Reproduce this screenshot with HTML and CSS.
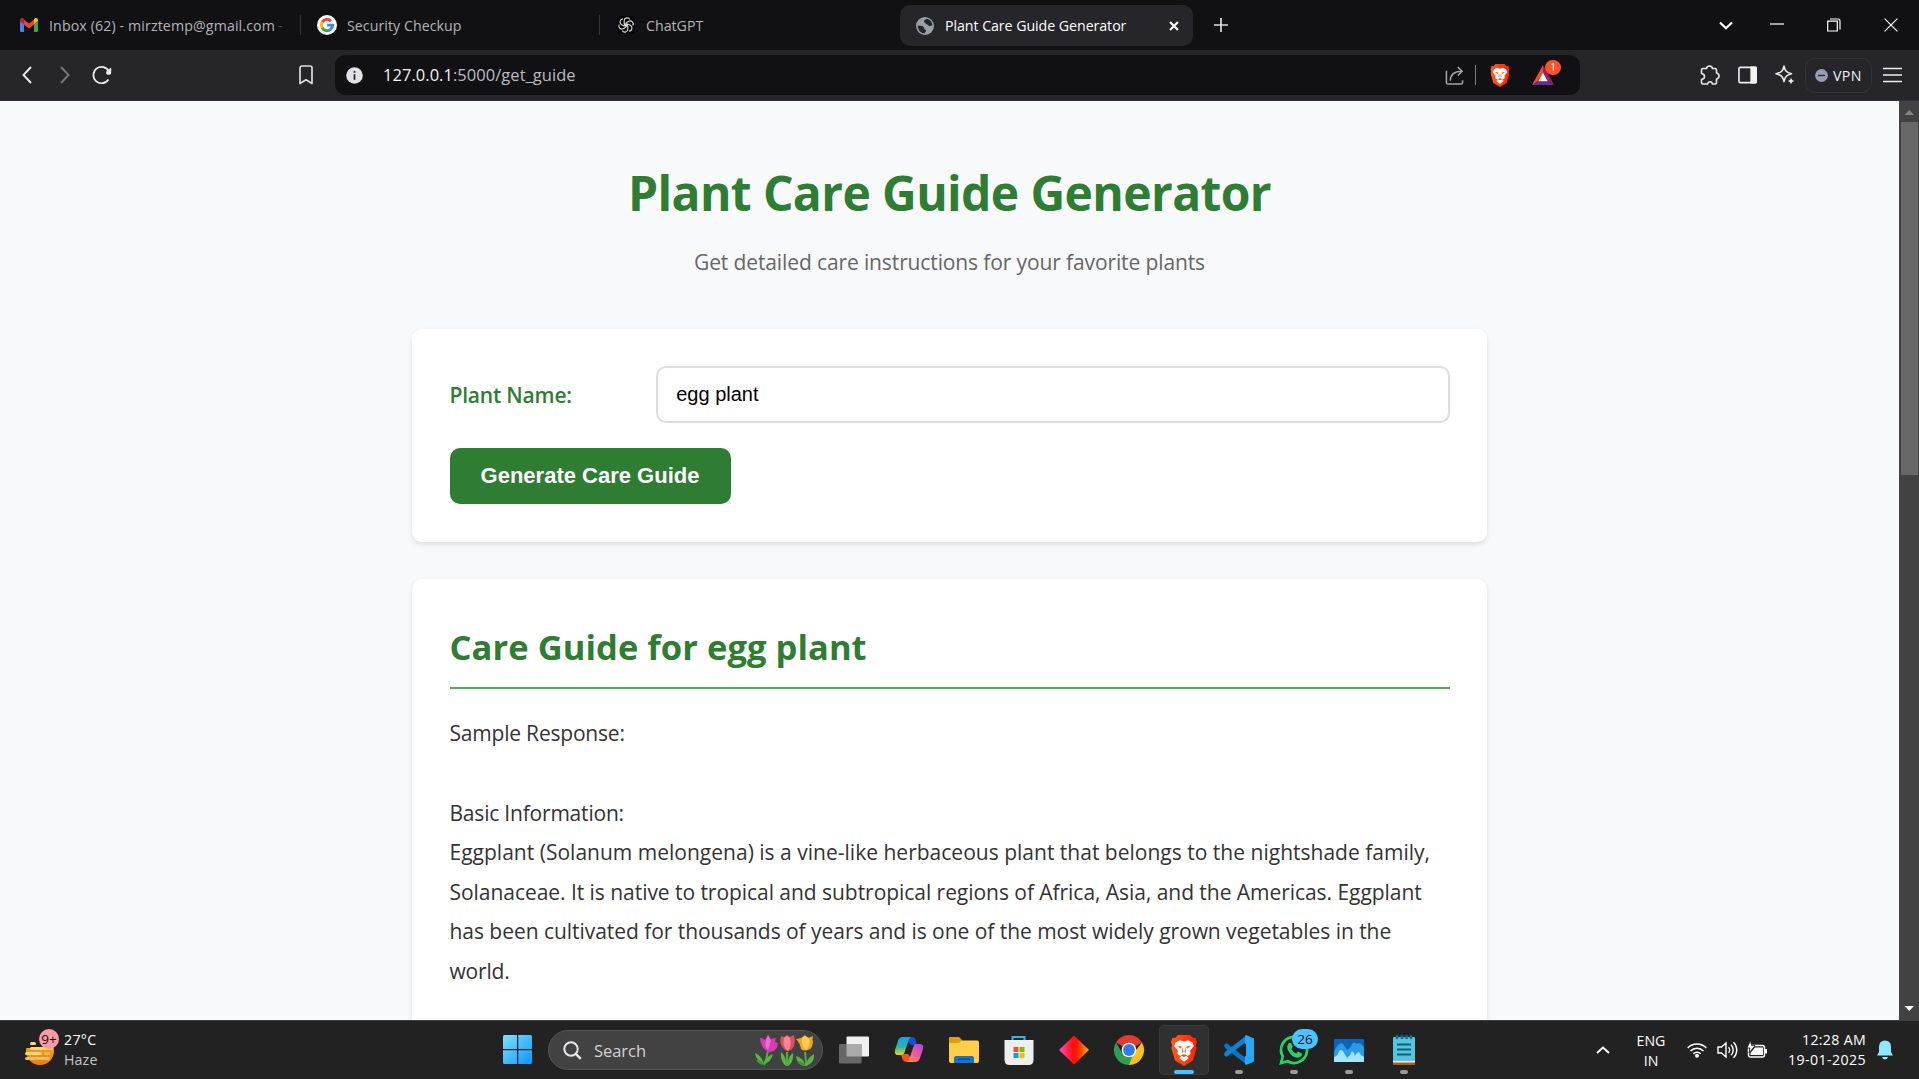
FILE: index.html
```html
<!DOCTYPE html>
<html lang="en">
<head>
<meta charset="utf-8">
<title>Plant Care Guide Generator</title>
<link rel="stylesheet" href="styles.css">
</head>
<body>
<svg class="defs" width="0" height="0" aria-hidden="true">
  <defs>
    <linearGradient id="braveFill" x1="0" x2="1"><stop offset="0" stop-color="#ff5a1f"/><stop offset="1" stop-color="#ff2000"/></linearGradient>
    <symbol id="lion" viewBox="0 0 26 31">
      <path fill="url(#braveFill)" d="M7 0h12l3 3 2.500-.300L26 7l-1 3 .6 3-3.600 12.500L13 31 4 25.500.4 13 1 10 0 7l1.500-4.300L4 3z"/>
      <path fill="#fff" d="M13 6.500l4-1.300 4.500 2.300 1.300 3.500-3.800 4.800.6 3.200-3.600 2.500 2 1.500-5 3.800-5-3.800 2-1.500L6.400 19l.6-3.200L3.200 11l1.300-3.500L9 5.200z"/>
      <path fill="#ff4a10" d="M6 10.500l5 1.200-1.500 1.800zM20 10.500l-5 1.200 1.500 1.800zM11.800 12l.6 5-1.400 1zM14.200 12l-.6 5 1.400 1zM9.500 20.500L13 19.200l3.500 1.300L13 22z"/>
    </symbol>
  </defs>
</svg>

<div class="screen">
  <header class="tabs">
    <div class="tab tab-mail">
      <svg class="ic-mail" viewBox="0 0 18 14"><path fill="#4285f4" d="M0 3l4 3v8H1.200A1.200 1.200 0 0 1 0 12.800z"/><path fill="#34a853" d="M18 3l-4 3v8h2.800a1.200 1.200 0 0 0 1.200-1.200z"/><path fill="#ea4335" d="M3 1l6 4.600L15 1v5L9 10.500 3 6z"/><path fill="#c5221f" d="M0 2C0 .3 2-.6 3.300.5L4 1v5L0 3z"/><path fill="#fbbc04" d="M18 2c0-1.700-2-2.600-3.300-1.500L14 1v5l4-3z"/></svg>
      <span class="t-mail">Inbox (62) - mirztemp@gmail.com</span><span class="fade">-</span>
    </div>
    <div class="tab tab-sec">
      <svg class="ic-20" viewBox="0 0 20 20"><circle cx="10" cy="10" r="10" fill="#fff"/><g fill="none" stroke-width="2.900"><path stroke="#ea4335" d="M5.100 7.300A5.600 5.600 0 0 1 14 6"/><path stroke="#fbbc04" d="M5.200 12.900A5.700 5.700 0 0 1 5.200 7.100"/><path stroke="#34a853" d="M5.100 12.700A5.600 5.600 0 0 0 13.600 14.300"/><path stroke="#4285f4" d="M10.200 10.100h5.500a5.600 5.600 0 0 1-2.200 4.300"/></g></svg>
      <span class="t-sec">Security Checkup</span>
    </div>
    <div class="tab tab-gpt">
      <svg class="ic-18" viewBox="0 0 20 20"><rect width="20" height="20" rx="4" fill="#050505"/><g fill="none" stroke="#d6d6d6" stroke-width="1.300"><path d="M8 9V5.200a3.300 3.300 0 0 1 6.200-1.400M8 9l3.800 2.200"/><path d="M8 9V5.200a3.300 3.300 0 0 1 6.200-1.400M8 9l3.800 2.200" transform="rotate(60 10 10)"/><path d="M8 9V5.200a3.300 3.300 0 0 1 6.200-1.400M8 9l3.800 2.200" transform="rotate(120 10 10)"/><path d="M8 9V5.200a3.300 3.300 0 0 1 6.200-1.400M8 9l3.800 2.200" transform="rotate(180 10 10)"/><path d="M8 9V5.200a3.300 3.300 0 0 1 6.200-1.400M8 9l3.800 2.200" transform="rotate(240 10 10)"/><path d="M8 9V5.200a3.300 3.300 0 0 1 6.200-1.400M8 9l3.800 2.200" transform="rotate(300 10 10)"/></g></svg>
      <span>ChatGPT</span>
    </div>
    <div class="tab tab-active">
      <svg class="ic-18" viewBox="0 0 18 18"><circle cx="9" cy="9" r="9" fill="#9aa0a6"/><path fill="#25252a" d="M10.500 1.700C9.500 3 8 2.800 8 4.500c0 1.200 1.500.8 1.700 2 .2 1 1.800.5 2.300 1.500.5 1.200 2.500 1 4.400.5A7.400 7.400 0 0 0 10.500 1.700zM1.600 8.600c2 .2 5 .2 6 1.400 1 1 .2 2 1.200 2.500 1 .4 1.600 1.200.8 2.200-.5.700-.8 1-1 1.700A7.400 7.400 0 0 1 1.600 8.600z"/></svg>
      <span class="t-plant">Plant Care Guide Generator</span>
      <svg class="ic-close" viewBox="0 0 12 12"><path d="M2 2l8 8m0-8l-8 8" stroke="#fff" stroke-width="2.200"/></svg>
    </div>
    <svg class="ic-plus" viewBox="0 0 14 14"><path d="M7 0v14M0 7h14" stroke="#ddd" stroke-width="1.700"/></svg>
    <div class="window-buttons">
      <svg width="16" height="16" viewBox="0 0 16 16"><path d="M2 5.500l6 5.700 6-5.700" fill="none" stroke="#fff" stroke-width="2.200"/></svg>
      <svg class="ic-min" width="14" height="16" viewBox="0 0 14 16"><path d="M0 7h14" stroke="#fff" stroke-width="1.200"/></svg>
      <svg class="ic-max" width="14" height="14" viewBox="0 0 14 14"><path d="M.7 3.200h9.600v9.800H.7z M3 1h8a2 2 0 0 1 2 2v8.500" fill="none" stroke="#fff" stroke-width="1.200"/></svg>
      <svg class="ic-exit" width="14" height="14" viewBox="0 0 14 14"><path d="M.6.600l12.800 12.800m0-12.800L.6 13.400" stroke="#fff" stroke-width="1.200"/></svg>
    </div>
  </header>

  <nav class="toolbar">
    <svg class="nav-back" viewBox="0 0 10 18"><path d="M9 1L1.500 9 9 17" fill="none" stroke="#eee" stroke-width="1.900"/></svg>
    <svg class="nav-fwd" viewBox="0 0 10 18"><path d="M1 1l7.500 8L1 17" fill="none" stroke="#77777c" stroke-width="1.900"/></svg>
    <svg class="nav-reload" viewBox="0 0 20 20"><path d="M16.500 14.500A8.200 8.200 0 1 1 17 6.500" fill="none" stroke="#eee" stroke-width="1.700"/><path d="M19.200 2.500v5a2 2 0 0 1-2 2.200h-1.700a2.500 2.500 0 0 1-1-3.400z" fill="#eee"/></svg>
    <svg class="nav-mark" viewBox="0 0 14 20"><path d="M1 18.500V3a2 2 0 0 1 2-2h8a2 2 0 0 1 2 2v15.500L7 14.800z" fill="none" stroke="#ddd" stroke-width="1.700" stroke-linejoin="round"/></svg>
    <div class="address">
      <svg class="ic-info" viewBox="0 0 17 17"><circle cx="8.500" cy="8.500" r="8.300" fill="#e2e1e8"/><path d="M8.500 4v1.800M8.500 7.300v5.500" stroke="#222" stroke-width="1.700"/></svg>
      <span class="url"><b>127.0.0.1</b>:5000/get_guide</span>
      <svg class="ic-share" viewBox="0 0 20 20"><path d="M1.500 5v12.300a1.700 1.700 0 0 0 1.700 1.700h13.600a1.700 1.700 0 0 0 1.700-1.700V15M5.500 15.500c.3-6 4-10 12-10M13.500 1l4.500 4.500-4.500 4.500" fill="none" stroke="#a5a5a9" stroke-width="1.600"/></svg>
      <i class="bar"></i>
      <svg class="ic-lion" viewBox="0 0 26 31"><use href="#lion"/></svg>
      <div class="rewards">
        <svg viewBox="0 0 22 20"><path fill="#ff4724" d="M11 0v7.500L5.500 16.500 0 20z"/><path fill="#9e1f63" d="M11 0l11 20-5.500-3.500L11 7.500z"/><path fill="#662d91" d="M0 20l5.500-3.700h11L22 20z"/><path fill="#fff" d="M11 7.500l4.800 8.800H6.200z"/></svg>
        <span class="rewards-count">1</span>
      </div>
    </div>
    <svg class="ic-puzzle" viewBox="0 0 20 20"><path d="M3 3.500h3.500Q7 1 9.500 1T12.500 3.500H15q1.500 0 1.500 1.500v3Q19 8.500 19 11t-2.500 3v3.500q0 1.500-1.500 1.500h-2.500q-.5-2.300-2.500-2.300T7.500 19H3q-1.500 0-1.500-1.500V14.500Q4.500 14 4.500 11.500T1.500 8.500V5Q1.500 3.500 3 3.500z" fill="none" stroke="#e8e8ea" stroke-width="1.600" stroke-linejoin="round"/></svg>
    <svg class="ic-panel" viewBox="0 0 20 18"><rect x="1" y="1" width="18" height="16" rx="1.500" fill="none" stroke="#eee" stroke-width="1.700"/><path d="M13 0h5.500A1.500 1.500 0 0 1 20 1.500v15a1.500 1.500 0 0 1-1.500 1.500H13z" fill="#f3f3f3"/></svg>
    <svg class="ic-spark" viewBox="0 0 20 20"><path d="M9 1c1 5 2.500 6.500 7.500 7.800-5 1.300-6.500 2.800-7.500 7.800-1-5-2.500-6.500-8-7.800C6.500 7.500 8 6 9 1z" fill="none" stroke="#e8e8ea" stroke-width="1.600" stroke-linejoin="round"/><path d="M16 12.500c.5 2.200 1 2.700 3.500 3.500-2.500.8-3 1.300-3.500 3.500-.5-2.200-1-2.700-3.500-3.500 2.500-.8 3-1.300 3.500-3.500z" fill="#eee"/></svg>
    <div class="vpn"><svg width="13" height="13" viewBox="0 0 13 13"><circle cx="6.500" cy="6.500" r="6.400" fill="#9a9ab2"/><path d="M3 6.500h7" stroke="#25252a" stroke-width="1.300"/></svg><span class="t-vpn">VPN</span></div>
    <svg class="ic-menu" viewBox="0 0 19 16"><path d="M0 1.500h19M0 8h19M0 14.500h19" stroke="#eee" stroke-width="1.700"/></svg>
  </nav>

  <div class="viewport">
    <main class="page">
      <h1>Plant Care Guide Generator</h1>
      <p class="subtitle">Get detailed care instructions for your favorite plants</p>
      <section class="card form">
        <div class="field">
          <label for="plant">Plant Name:</label>
          <input id="plant" type="text" value="egg plant">
        </div>
        <button class="generate" type="button">Generate Care Guide</button>
      </section>
      <section class="card guide">
        <h2>Care Guide for egg plant</h2>
        <div class="answer">
          <p class="tight">Sample Response:</p>
          <p class="tight gap">Basic Information:</p>
          <p><span class="wide">Eggplant (Solanum melongena) is a vine-like herbaceous plant that belongs to the nightshade family,</span>
          <span class="even">Solanaceae. It is native to tropical and subtropical regions of Africa, Asia, and the Americas. Eggplant</span>
          <span class="even">has been cultivated for thousands of years and is one of the most widely grown vegetables in the</span>
          <span class="tight">world.</span></p>
        </div>
      </section>
    </main>
    <div class="scrollbar">
      <svg class="arrow" viewBox="0 0 20 21"><path d="M5.500 14h9.500l-4.700-5z" fill="#858585"/></svg>
      <i class="thumb"></i>
      <svg class="arrow arrow-down" viewBox="0 0 20 21"><path d="M5.500 7h9.500l-4.700 5z" fill="#fff"/></svg>
    </div>
  </div>

  <footer class="taskbar">
    <div class="weather">
      <div class="weather-icon">
        <svg viewBox="0 0 30 36"><defs><linearGradient id="sun" x1="0" y1="0" x2="0" y2="1"><stop offset="0" stop-color="#ffb21c"/><stop offset="1" stop-color="#f07a0c"/></linearGradient></defs><circle cx="15" cy="21" r="14" fill="url(#sun)"/><path fill="#222" d="M0 5h18v13H0z"/><g stroke-linecap="round" stroke-width="3"><path stroke="#fbd774" d="M6.500 13.500h3M6.500 18.500h20M1.500 23.500h14"/><path stroke="#f0bd5a" d="M20.500 23.500h3"/><path stroke="#e3bd75" d="M1.500 28.500h22"/></g></svg>
        <span class="weather-count">9+</span>
      </div>
      <div class="weather-text"><span class="temp">27°C</span><span class="dim">Haze</span></div>
    </div>
    <svg class="start" viewBox="0 0 30 30"><defs><linearGradient id="win" x1="0" y1="0" x2="1" y2="1"><stop offset="0" stop-color="#7fe0ff"/><stop offset="1" stop-color="#0a96ff"/></linearGradient></defs><path fill="url(#win)" d="M0 1.500A1.500 1.500 0 0 1 1.500 0H14v14H0zM15.300 0h12.200A1.500 1.500 0 0 1 29 1.500V14H15.300zM0 15.300h14V29H1.500A1.500 1.500 0 0 1 0 27.500zM15.300 15.300H29v12.200a1.500 1.500 0 0 1-1.500 1.500H15.300z"/></svg>
    <div class="search">
      <svg class="ic-search" viewBox="0 0 19 19"><circle cx="8" cy="8" r="6.700" fill="none" stroke="#e6e8ec" stroke-width="2"/><path d="M12.800 12.800l5 5" stroke="#e6e8ec" stroke-width="2.400"/></svg>
      <span class="search-text">Search</span>
      <svg class="tulips" viewBox="0 0 60 32">
        <g stroke="#4fae3c" stroke-width="2" fill="none"><path d="M13 16q-1 7-4 14M32 17v14M50 17q1 7 1 14"/></g>
        <path fill="#5db543" d="M9 29Q1 26 0 18q7 3 9 11zM9 29q2-8 9-10-2 8-9 10zM31 31q-6-5-5-14 6 5 5 14zM33 31q6-4 5-13-6 4-5 13zM50 31q-8-1-9-10 8 2 9 10zM51 31q0-7 8-12 1 9-8 12z"/>
        <path fill="#3f9a35" d="M9 30q-5 0-8-5 6 0 8 5zM50 31q-5 0-8-5 6 0 8 5z"/>
        <path fill="#d63bb4" d="M5 3q3 0 5 2l3-5 3 4 5-1-1 4 3 1q-1 9-9 9Q6 14 5 3z"/><path fill="#f06bd0" d="M11 5l2-5 3 6-3 9q-4-4-2-10z"/>
        <path fill="#e34b63" d="M26 1l3 1 3-2 3 2 4-2q2 8-1 13-5 6-10 0-4-5-2-12z"/><path fill="#f98793" d="M29 3l3-2 3 2q2 8-2 13-6-4-4-13z"/>
        <path fill="#eda526" d="M41 4l5-1 4-3 3 3 5-2q-1 3 0 6-1 6-3 7-6 3-9 0-1-6-5-10z"/><path fill="#ffcb58" d="M47 3l3-2 4 2q2 8-3 12-5-4-4-12z"/>
      </svg>
    </div>
    <div class="apps">
      <div class="app"><svg width="30" height="30" viewBox="0 0 30 30"><rect x="7.500" y="1.500" width="22.500" height="20" rx="1" fill="#f0f0f0"/><rect x="0" y="9" width="22.500" height="19.500" rx="1" fill="#686868"/><path d="M7.500 9h15v12.500h-15z" fill="#aaa"/></svg></div>
      <div class="app"><svg width="30" height="28" viewBox="0 0 30 28"><defs><linearGradient id="cpa" x1="0" y1="0" x2="0" y2="1"><stop offset="0" stop-color="#1c9ff0"/><stop offset=".55" stop-color="#27b7a5"/><stop offset="1" stop-color="#f5d20e"/></linearGradient><linearGradient id="cpb" x1="1" y1="0" x2="0" y2="1"><stop offset="0" stop-color="#9a4df5"/><stop offset=".5" stop-color="#f0569b"/><stop offset="1" stop-color="#ff9a3c"/></linearGradient></defs><path fill="#1652d6" d="M10 1h8q3 0 4 4l1 4h-6z"/><path fill="#f0522c" d="M20 26h-7q-4 0-5-4l-1-4h7z"/><path fill="url(#cpa)" d="M9 1h8q-2 1-3 5l-3 9q-1 4-4 4H4q-4 0-3-5l3-9q1-4 5-4z"/><path fill="url(#cpb)" d="M21 26h-8q2-1 3-5l3-9q1-4 4-4h3q4 0 3 5l-3 9q-1 4-5 4z"/></svg></div>
      <div class="app"><svg width="30" height="28" viewBox="0 0 30 28"><path fill="#dfa00c" d="M0 2Q0 1 1 1h9l3 3v5H0z"/><path fill="#ffcf48" d="M0 7h10l3-2.500h15q2 0 2 2V25q0 2-2 2H2q-2 0-2-2z"/><path fill="#1374cf" d="M5 27v-5q0-2 2-2h16q2 0 2 2v5z"/><path d="M9 23.300h12" stroke="#0a4c94" stroke-width="1.300"/></svg></div>
      <div class="app"><svg width="30" height="30" viewBox="0 0 30 30"><path d="M8.500 6V2h12v4" fill="none" stroke="#2fb4ec" stroke-width="2"/><path fill="#eeeeee" d="M.5 5h29v20q0 5-5 5h-19q-5 0-5-5z"/><path fill="#f25022" d="M9.500 12h5v5h-5z"/><path fill="#7fba00" d="M15.500 12h5v5h-5z"/><path fill="#00a4ef" d="M9.500 18h5v5h-5z"/><path fill="#ffb900" d="M15.500 18h5v5h-5z"/></svg></div>
      <div class="app"><svg width="30" height="30" viewBox="0 0 30 30"><defs><linearGradient id="dia"><stop offset="0" stop-color="#ff4fc8"/><stop offset=".45" stop-color="#ff1010"/><stop offset=".6" stop-color="#ff1800"/><stop offset="1" stop-color="#ffb000"/></linearGradient></defs><path fill="url(#dia)" d="M15 .5L30 15 15 29.500 0 15z"/></svg></div>
      <div class="app"><svg width="30" height="30" viewBox="0 0 30 30"><path fill="#e33b2e" d="M15 15L2 7.500a15 15 0 0 1 26 0z"/><path fill="#fbc116" d="M15 15h7l6-7.500A15 15 0 0 1 15 30l-1-2z"/><path fill="#2f9e4f" d="M2 7.500L8.500 18.500 18.400 21.500 15 30A15 15 0 0 1 2 7.500z"/><path fill="#e33b2e" d="M15 8h13l-.2-.7H15z"/><circle cx="15" cy="15" r="7.300" fill="#fff"/><circle cx="15" cy="15" r="5.900" fill="#2e7bea"/></svg></div>
      <div class="app current"><svg width="26" height="31" viewBox="0 0 26 31"><use href="#lion"/></svg></div>
      <div class="app running"><svg width="30" height="30" viewBox="0 0 30 30"><path fill="#0a74c4" d="M0 10l2.500-2L23 24v6L1 13z"/><path fill="#0d82d6" d="M0 20l2.500 2L23 6V0L1 17z"/><path fill="#29a7f3" d="M22 0l8 3.500v23L22 30l-1-1V1z"/><path fill="#222" d="M22 8.500v13L13.500 15z"/></svg></div>
      <div class="app running"><svg width="30" height="30" viewBox="0 0 30 30"><path d="M2 28l1.800-6.500a13 13 0 1 1 4.900 4.800z" fill="none" stroke="#25d366" stroke-width="2.700"/><path fill="#25d366" d="M10 8q2-1 3 2l.7 2-1.500 2q1.500 3 5 4.500l1.800-2 4 2q0 4-4.500 4.200Q13 22.500 9 15.500 7 11 10 8z"/></svg><span class="app-count">26</span></div>
      <div class="app running"><svg width="30" height="23" viewBox="0 0 30 23"><rect width="30" height="23" rx="1" fill="#0a63b8"/><path fill="#2b9be6" d="M0 13Q2 7 7 4q3 1 6 7 3-1 5-6 2-3 5 0 2-3 7 3v15H0z"/><path fill="#a6e3ff" d="M0 18q4-1 5-6 3-3 5 2l3 5q4-3 5-7 2 1 3 5 3-7 6-1l3 2v5H0z"/></svg></div>
      <div class="app running"><svg width="22" height="30" viewBox="0 0 22 30"><path fill="#b35a13" d="M0 26h22v4H0z"/><path fill="#e8eef0" d="M0 25h22v2.500H0z"/><rect y="2" width="22" height="24" rx="1" fill="#55c4de"/><path d="M4 9.500h14M4 14.500h14M4 19.500h14" stroke="#0f5f7c" stroke-width="2"/><path d="M4 0v4M9 0v4M13.500 0v4M18 0v4" stroke="#146c8b" stroke-width="2.500"/></svg></div>
    </div>
    <div class="tray">
      <svg width="14" height="8" viewBox="0 0 14 8"><path d="M1 7l6-5.500L13 7" fill="none" stroke="#fff" stroke-width="2"/></svg>
      <div class="lang"><span>ENG</span><span>IN</span></div>
      <svg class="wifi" viewBox="0 0 20 16"><g fill="none" stroke="#fff" stroke-width="1.500"><path d="M.7 6a13 13 0 0 1 18.600 0M3.500 9a9 9 0 0 1 13 0M6.300 11.800a5.200 5.200 0 0 1 7.400 0"/></g><circle cx="10" cy="13.700" r="2" fill="#fff"/></svg>
      <svg class="volume" viewBox="0 0 21 18"><g fill="none" stroke="#fff" stroke-width="1.400"><path d="M1 6h3.500L9 2v14l-4.500-4H1zM11.500 6.200a4 4 0 0 1 0 5.600M14 3.700a7.500 7.500 0 0 1 0 10.600M16.500 1.200a11 11 0 0 1 0 15.600"/></g></svg>
      <svg class="battery" viewBox="0 0 21 18"><rect x="1.500" y="4.500" width="16" height="11.500" rx="2" fill="none" stroke="#fff" stroke-width="1.400"/><path d="M8 6.500h8V14H3.500v-2z" fill="#fff"/><path d="M18 8h2v4.500h-2z" fill="#fff"/><path d="M3.500-.5L0 7h3l-1 5 6-7.500H4.500z" fill="#fff" stroke="#222" stroke-width=".8"/></svg>
      <div class="clock"><span class="time">12:28 AM</span><span class="date">19-01-2025</span></div>
      <svg class="bell" viewBox="0 0 16 20"><path fill="#8fe6ff" d="M8 .5q6 0 6 6.500v5l2 3.500H0L2 12V7Q2 .5 8 .500zM5 17h6q-1 2.500-3 2.500T5 17z"/></svg>
    </div>
  </footer>
</div>
</body>
</html>
```
FILE: styles.css
```css
* { box-sizing: border-box; }

body {
  margin: 0;
  overflow: hidden;
  font-family: "Open Sans", "Noto Sans", sans-serif;
}

.defs { position: absolute; }

svg { display: block; flex: none; overflow: visible; }

span { white-space: nowrap; }

.screen {
  display: flex;
  flex-direction: column;
  width: 1919px;
  height: 1079px;
}

/* Tab strip */
.tabs {
  display: flex;
  align-items: center;
  height: 50px;
  flex: none;
  background: #111113;
  color: #b4b4b8;
  font-size: 14.200px;
}

.tab { display: flex; align-items: center; height: 20px; flex: none; }
.tab-mail { width: 301px; padding-left: 20px; border-right: 1px solid #37373b; }
.tab-sec { width: 299px; padding-left: 16px; border-right: 1px solid #37373b; }
.tab-gpt { width: 300px; padding-left: 17px; }
.tab-active {
  width: 293px;
  height: 41px;
  margin-top: 1px;
  padding-left: 16px;
  border-radius: 10px;
  background: #25252a;
  color: #fff;
}
.t-mail { letter-spacing: .118px; }
.t-sec { letter-spacing: .05px; }
.t-plant { letter-spacing: -.05px; }
.ic-mail { width: 18px; height: 14px; margin-right: 11px; }
.ic-20 { width: 20px; height: 20px; margin-right: 10px; }
.ic-18 { width: 18px; height: 18px; margin-right: 11px; }
.fade { margin-left: 3px; color: #4c4c50; }
.ic-close { width: 12px; height: 12px; margin: 0 13px 0 auto; }
.ic-plus { width: 14px; height: 14px; margin-left: 21px; }
.window-buttons { display: flex; align-items: center; margin: 0 21px 0 auto; }
.ic-min { margin-left: 36px; }
.ic-max { margin-left: 43px; }
.ic-exit { margin-left: 43px; }

/* Toolbar */
.toolbar {
  display: flex;
  align-items: center;
  height: 51px;
  flex: none;
  background: #25252a;
  border-bottom: 1px solid #303036;
}
.nav-back { width: 10px; height: 18px; margin-left: 22px; }
.nav-fwd { width: 10px; height: 18px; margin-left: 28px; }
.nav-reload { width: 20px; height: 20px; margin-left: 22px; }
.nav-mark { width: 14px; height: 20px; margin-left: 187px; }
.address {
  display: flex;
  align-items: center;
  width: 1245px;
  height: 40px;
  margin-left: 22px;
  padding-left: 11px;
  border-radius: 10px;
  background: #111113;
}
.ic-info { width: 17px; height: 17px; margin: 1px 20px 0 0; }
.url { padding-bottom: 2px; color: #bcbcc0; font-size: 16.500px; letter-spacing: .04px; }
.url b { font-weight: 400; color: #f2f2f4; }
.ic-share { width: 19px; height: 19px; margin-left: auto; }
.bar { width: 1px; height: 20px; margin: 0 14px 0 11px; background: #7c7c80; }
.ic-lion { width: 20px; height: 23px; }
.rewards { position: relative; width: 22px; height: 20px; margin: 0 26px 0 22px; }
.rewards-count {
  position: absolute;
  left: 13px;
  top: -5px;
  width: 16px;
  height: 15px;
  border-radius: 8px;
  background: #fb542b;
  color: #fff;
  font-size: 10px;
  line-height: 15px;
  text-align: center;
}
.ic-puzzle { width: 20px; height: 20px; margin-left: 120px; }
.ic-panel { width: 19px; height: 18px; margin-left: 18px; }
.ic-spark { width: 20px; height: 20px; margin-left: 18px; }
.vpn {
  display: flex;
  align-items: center;
  gap: 5px;
  width: 67px;
  height: 35px;
  margin-left: 10px;
  padding-left: 9px;
  border: 1px solid #333338;
  border-radius: 10px;
  color: #f0f0f2;
  font-size: 14.200px;
}
.t-vpn { letter-spacing: .4px; }
.ic-menu { width: 19px; height: 16px; margin-left: 11px; }

/* Page */
.viewport { display: flex; height: 919px; flex: none; background: #f8f9fb; }
.page { width: 1899px; height: 919px; padding: 52px 412px 0; overflow: hidden; }
h1, h2, p { margin: 0; }
h1 {
  color: #2e7d32;
  font-size: 48px;
  font-weight: 700;
  letter-spacing: -.621px;
  line-height: 80px;
  text-align: center;
}
.subtitle {
  margin: 11.500px 0 49.300px;
  color: #666;
  font-size: 21px;
  letter-spacing: -.118px;
  line-height: 35.200px;
  text-align: center;
}
.card {
  width: 1075px;
  padding: 37px 37.500px;
  border-radius: 10px;
  background: #fff;
  box-shadow: 0 2.500px 5px rgba(0, 0, 0, .1);
}
.form { height: 213px; }
.field { display: flex; align-items: center; gap: 18.750px; height: 57px; margin-bottom: 25px; }
.field label {
  width: 187.500px;
  padding-top: 1px;
  color: #2e7d32;
  font-size: 21px;
  font-weight: 600;
  letter-spacing: -.2px;
}
.field input {
  flex: 1;
  height: 57px;
  padding: 0 18.500px;
  border: 2px solid #ddd;
  border-radius: 10px;
  background: #fff;
  color: #000;
  font: 20px "Liberation Sans", Arial, sans-serif;
}
.generate {
  display: block;
  width: 281px;
  height: 56px;
  padding: 0 0 1px;
  border: 0;
  border-radius: 10px;
  background: #2e7d32;
  color: #fff;
  font: bold 22px "Liberation Sans", Arial, sans-serif;
}
.guide { height: 600px; margin-top: 37px; }
h2 {
  padding: 1.500px 0 12px;
  border-bottom: 2px solid #4caf50;
  color: #2e7d32;
  font-size: 34.500px;
  font-weight: 700;
  letter-spacing: .06px;
  line-height: 57.600px;
}
.answer { padding-top: 25.300px; color: #333; font-size: 21px; line-height: 39.600px; }
.answer .gap { margin-top: 39.600px; }
.answer span { display: block; }
.tight { letter-spacing: -.2px; }
.wide { letter-spacing: .01px; }
.even { letter-spacing: -.044px; }

/* Scrollbar */
.scrollbar { display: flex; flex-direction: column; width: 20px; background: #424242; }
.arrow { width: 20px; height: 21px; }
.thumb { width: 17px; height: 353px; margin-left: 2px; background: #686868; }
.arrow-down { margin-top: auto; }

/* Taskbar */
.taskbar {
  display: flex;
  align-items: center;
  height: 59px;
  flex: none;
  border-top: 1px solid #3c3e40;
  background: #222;
  color: #fff;
}
.weather { display: flex; width: 503px; padding-left: 25px; }
.weather-icon { position: relative; width: 30px; height: 36px; margin-right: 9px; }
.weather-count {
  position: absolute;
  left: 14px;
  top: -1px;
  width: 20px;
  height: 20px;
  border-radius: 50%;
  background: #ff99a4;
  color: #111;
  font-size: 13.500px;
  line-height: 20px;
  text-align: center;
}
.weather-text { display: flex; flex-direction: column; font-size: 14.200px; line-height: 20px; align-items: flex-start; }
.temp { letter-spacing: .3px; }
.dim { color: #c4c4c4; letter-spacing: .13px; }
.start { width: 30px; height: 30px; }
.search {
  display: flex;
  align-items: center;
  width: 275px;
  height: 40px;
  margin-left: 15px;
  padding: 0 7px 0 14px;
  border: 1px solid #565656;
  border-radius: 20px;
  background: #424242;
}
.ic-search { width: 19px; height: 19px; }
.search-text { margin-left: 12px; color: #d2d2d2; font-size: 16.500px; letter-spacing: -.04px; }
.tulips { width: 60px; height: 32px; margin: 2px 0 0 auto; }
.apps { display: flex; gap: 5px; margin-left: 6px; }
.app {
  position: relative;
  display: flex;
  align-items: center;
  justify-content: center;
  width: 50px;
  height: 50px;
  border-radius: 5px;
}
.current { background: #303030; box-shadow: inset 0 0 0 1px #3a3a3a; }
.current::after, .running::after {
  content: "";
  position: absolute;
  bottom: 1px;
  width: 8px;
  height: 4px;
  border-radius: 2px;
  background: #9a9a9a;
}
.current::after { width: 20px; background: #4cc2ff; }
.app-count {
  position: absolute;
  left: 23px;
  top: 4px;
  width: 26px;
  height: 20px;
  border-radius: 10px;
  background: #4cc2ff;
  color: #111;
  font-size: 13.500px;
  line-height: 20px;
  text-align: center;
}
.tray { display: flex; align-items: center; margin: 0 26px 0 auto; font-size: 14.200px; line-height: 20px; }
.lang { display: flex; flex-direction: column; align-items: center; width: 30px; margin: 1px 21px 0 26px; }
.wifi { width: 20px; height: 16px; margin-right: 10px; }
.volume { width: 21px; height: 18px; margin-right: 9px; }
.battery { width: 21px; height: 18px; }
.clock { display: flex; flex-direction: column; align-items: flex-end; width: 81px; margin: 0 11px 0 17px; }
.time { letter-spacing: .3px; }
.date { letter-spacing: .4px; }
.bell { width: 16px; height: 20px; }
```
